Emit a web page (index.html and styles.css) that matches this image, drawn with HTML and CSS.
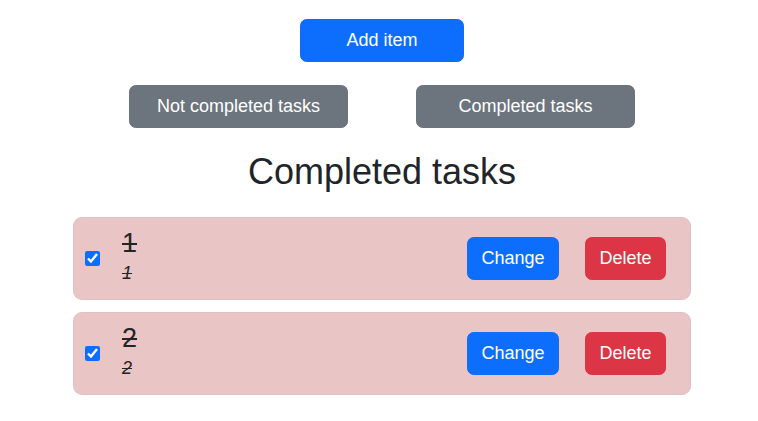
FILE: index.html
```html
<!DOCTYPE html>
<html lang="en">
<head>
<meta charset="utf-8">
<title>Tasks</title>
<link rel="stylesheet" href="styles.css">
</head>
<body>
<div class="app">
  <div class="add-row">
    <button class="btn btn-primary btn-add">Add item</button>
  </div>
  <div class="filter-row">
    <button class="btn btn-secondary btn-filter">Not completed tasks</button>
    <button class="btn btn-secondary btn-filter">Completed tasks</button>
  </div>
  <h2 class="heading">Completed tasks</h2>
  <div class="list">
    <div class="task">
      <input class="check" type="checkbox" checked>
      <div class="task-text">
        <div class="task-title">1</div>
        <div class="task-desc">1</div>
      </div>
      <div class="task-actions">
        <button class="btn btn-primary">Change</button>
        <button class="btn btn-danger">Delete</button>
      </div>
    </div>
    <div class="task">
      <input class="check" type="checkbox" checked>
      <div class="task-text">
        <div class="task-title">2</div>
        <div class="task-desc">2</div>
      </div>
      <div class="task-actions">
        <button class="btn btn-primary">Change</button>
        <button class="btn btn-danger">Delete</button>
      </div>
    </div>
  </div>
</div>
</body>
</html>
```
FILE: styles.css
```css
* { box-sizing: border-box; }
body {
  margin: 0;
  background: #fff;
  color: #212529;
  font-family: "Liberation Sans", Arial, sans-serif;
  font-size: 18px;
  line-height: 1.5;
}
.app {
  width: 752px;
  margin-left: 6px;
  padding-top: 19px;
}
.btn {
  font-family: inherit;
  font-size: 18px;
  line-height: 1.5;
  padding: 6.75px 13.5px;
  border: 1px solid transparent;
  border-radius: 6.75px;
  color: #fff;
  cursor: pointer;
}
.btn-primary { background: #0d6efd; border-color: #0d6efd; }
.btn-secondary { background: #6c757d; border-color: #6c757d; }
.btn-danger { background: #dc3545; border-color: #dc3545; }
.add-row {
  display: flex;
  justify-content: center;
}
.btn-add { width: 164px; }
.filter-row {
  display: flex;
  justify-content: center;
  gap: 68px;
  margin-top: 23.5px;
}
.btn-filter { width: 219px; }
.heading {
  margin: 22.8px 0 23.5px;
  text-align: center;
  font-size: 36px;
  font-weight: 400;
  line-height: 1.2;
}
.list {
  width: 618px;
  margin: 0 auto;
  display: flex;
  flex-direction: column;
  gap: 12px;
}
.task {
  height: 83px;
  display: flex;
  align-items: center;
  padding: 0 24px 0 11px;
  background: #eac5c5;
  border: 1px solid #dcc3c3;
  border-radius: 9px;
}
.check {
  width: 15px;
  height: 15px;
  margin: 0;
  accent-color: #0d6efd;
}
.task-text {
  margin-left: 22px;
  margin-bottom: 3px;
  flex: 1;
}
.task-title {
  font-size: 27px;
  line-height: 1.2;
  text-decoration: line-through;
}
.task-desc {
  font-size: 18px;
  font-style: italic;
  text-decoration: line-through;
}
.task-actions {
  display: flex;
  gap: 26px;
}
```
